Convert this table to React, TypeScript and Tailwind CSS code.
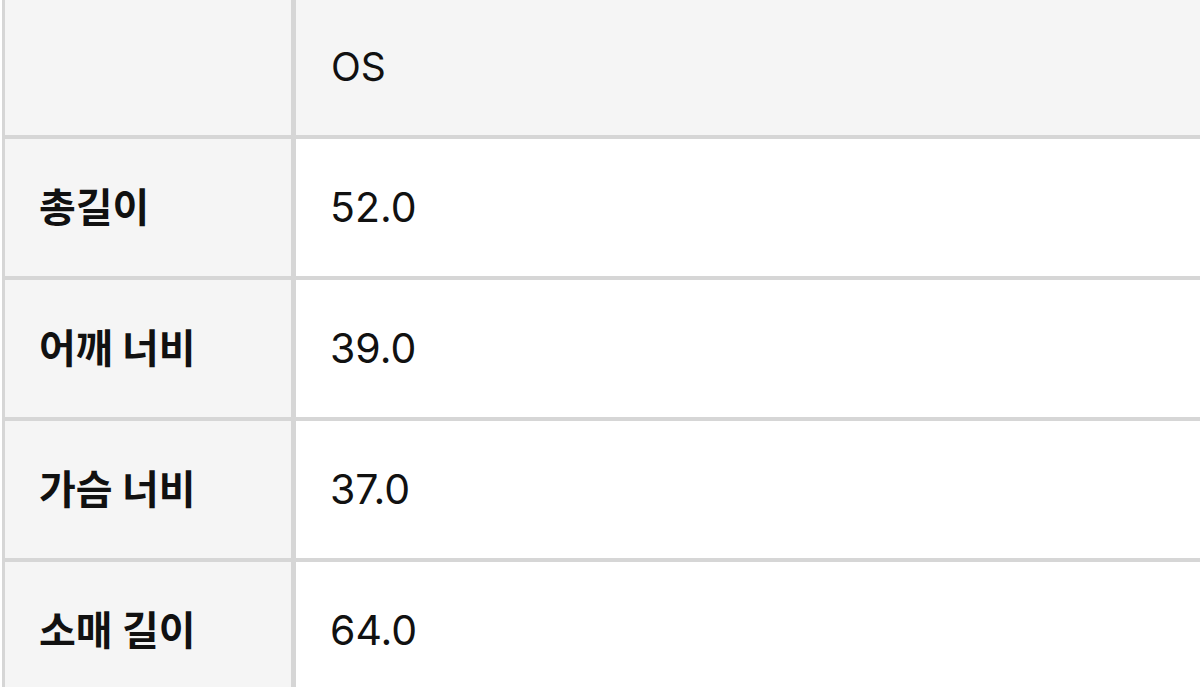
const rows = [
  { label: "총길이", value: "52.0" },
  { label: "어깨 너비", value: "39.0" },
  { label: "가슴 너비", value: "37.0" },
  { label: "소매 길이", value: "64.0" },
];

export default function App() {
  return (
    <div
      className="h-[687px] w-[1200px] overflow-hidden bg-white text-[#111111]"
      style={{ fontFamily: '"Inter", "Noto Sans CJK KR", sans-serif' }}
    >
      <div className="ml-[2px] border-l-[3px] border-[#d6d6d6]">
        <div className="flex h-[139px] border-b-4 border-[#d6d6d6] bg-[#f5f5f5]">
          <div className="w-[291px] shrink-0 border-r-[5px] border-[#d6d6d6]" />
          <div className="flex flex-1 items-center pl-[35px] text-[39px]">OS</div>
        </div>
        {rows.map((row) => (
          <div key={row.label} className="flex h-[141px] border-b-4 border-[#d6d6d6]">
            <div className="flex w-[291px] shrink-0 items-center border-r-[5px] border-[#d6d6d6] bg-[#f5f5f5] pl-[34px] text-[40px] font-bold">
              {row.label}
            </div>
            <div className="flex flex-1 items-center bg-white pl-[34px] text-[41px]">
              {row.value}
            </div>
          </div>
        ))}
      </div>
    </div>
  );
}
